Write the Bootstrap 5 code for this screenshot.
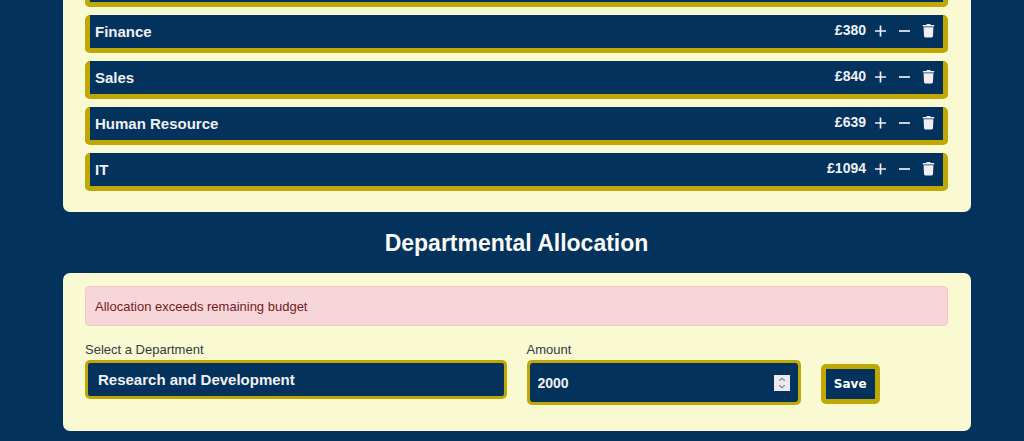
<!DOCTYPE html>
<html lang="en">
<head>
<meta charset="utf-8">
<meta name="viewport" content="width=device-width, initial-scale=1">
<title>Departmental Allocation</title>
<link href="https://cdn.jsdelivr.net/npm/bootstrap@5.3.0/dist/css/bootstrap.min.css" rel="stylesheet">
<style>
  :root { --navy: #03325c; --gold: #bfa805; --cream: #f9f9d2; }
  body { background: var(--navy); font-family: "Liberation Sans", Arial, sans-serif; font-size: 13px; line-height: 20px; overflow: hidden; }
  .page { padding: 0 53px 10px 63px; }
  .panel { background: var(--cream); border-radius: 7px; padding: 13px 23px 26px 22px; }
  .panel-list { border-top-left-radius: 0; border-top-right-radius: 0; padding-top: 0; padding-bottom: 21px; }
  .dept { height: 38px; background: var(--navy); border: 5px solid var(--gold); border-top: 0; border-radius: 5px; padding: 0 7px 0 5px; color: #f0f0f4; font-weight: 700; font-size: 15px; }
  /* Foot of the department above the visible part of the list */
  .dept-foot { height: 7px; border-top-left-radius: 0; border-top-right-radius: 0; }
  .dept-cost { font-size: 14px; margin-right: 6px; padding-bottom: 3px; }
  .icon-btn { width: 16px; height: 16px; color: #eeeef4; margin-bottom: 1px; }
  .heading { font-size: 23px; line-height: 28px; margin: 17px 0 16px; color: #fafaf5; padding-right: 1px; }
  .notice { padding: 10px 9px 8px; margin-bottom: 13px; color: #721c24; background: #f7d6d9; border-color: #f5c6cb; border-radius: 4px; }
  .fields { --bs-gutter-x: 20px; }
  .fields label { color: #343a40; line-height: 21px; display: block; }
  .box, .box:focus { background-color: var(--navy); border: 3px solid var(--gold); border-radius: 5px; color: #f0f0f4; font-weight: 700; box-shadow: none; }
  .box-select { background-image: none; height: 39px; padding: 2px 10px 0; font-size: 15px; }
  .box-number { height: 45px; padding: 0 30px 0 8px; font-size: 14px; appearance: textfield; }
  .box-number::-webkit-inner-spin-button { display: none; }
  .spinner { right: 11px; top: 15px; pointer-events: none; }
  .save { background: var(--navy); border: 5px solid var(--gold); border-radius: 5px; color: #fff; font-family: "DejaVu Sans", sans-serif; font-size: 12px; font-weight: 700; line-height: 18px; padding: 6px 8px; margin-top: 25px; }
</style>
</head>
<body>
<svg class="d-none" aria-hidden="true">
  <symbol id="plus" viewBox="0 0 16 16"><path d="M8.5 2.5v11M3 8h11" fill="none" stroke="currentColor" stroke-width="1.7"/></symbol>
  <symbol id="minus" viewBox="0 0 16 16"><path d="M3 8h11" fill="none" stroke="currentColor" stroke-width="1.7"/></symbol>
  <symbol id="trash" viewBox="0 0 16 16"><path d="M2.8 2h3.4l.6-.9h3.4l.6.9h3.4v1.4H2.8zM3.6 4.2h9.8l-.4 8.9q-.1 1.4-1.3 1.4H5.3q-1.2 0-1.3-1.4z" fill="currentColor"/></symbol>
</svg>
<main class="page">
  <section class="panel panel-list">
    <ul class="list-unstyled d-flex flex-column gap-2 mb-0" id="departments"></ul>
  </section>
  <h2 class="heading fw-bold text-center">Departmental Allocation</h2>
  <section class="panel">
    <div class="alert notice" role="alert">Allocation exceeds remaining budget</div>
    <form class="row fields">
      <div class="col-6">
        <label for="department">Select a Department</label>
        <select class="form-select box box-select" id="department"><option>Research and Development</option></select>
      </div>
      <div class="col-4">
        <label for="amount">Amount</label>
        <div class="position-relative">
          <input class="form-control box box-number" id="amount" type="number" value="2000">
          <svg class="spinner position-absolute" width="16" height="16" viewBox="0 0 16 16" aria-hidden="true"><rect width="16" height="16" fill="#ebebef"/><path d="M5.2 5.7 8 3.3l2.8 2.4M5.2 10.3 8 12.7l2.8-2.4" fill="none" stroke="#8c8793" stroke-width="1.3"/></svg>
        </div>
      </div>
      <div class="col-2"><button class="save" type="button">Save</button></div>
    </form>
  </section>
</main>
<script src="https://cdn.jsdelivr.net/npm/bootstrap@5.3.0/dist/js/bootstrap.bundle.min.js"></script>
<script>
  const departments = [["Finance", 380], ["Sales", 840], ["Human Resource", 639], ["IT", 1094]];
  const actions = [["plus", "Increase"], ["minus", "Decrease"], ["trash", "Delete"]];
  document.getElementById("departments").innerHTML = '<li class="dept dept-foot" aria-hidden="true"></li>' + departments.map(([name, cost]) => `
    <li class="dept d-flex align-items-center">
      <span class="me-auto">${name}</span>
      <span class="dept-cost">£${cost}</span>
      <span class="d-flex gap-2">${actions.map(([icon, label]) =>
        `<button class="icon-btn border-0 p-0 bg-transparent" type="button" aria-label="${label} ${name}"><svg class="d-block" width="16" height="16"><use href="#${icon}"/></svg></button>`).join("")}</span>
    </li>`).join("");
</script>
</body>
</html>
